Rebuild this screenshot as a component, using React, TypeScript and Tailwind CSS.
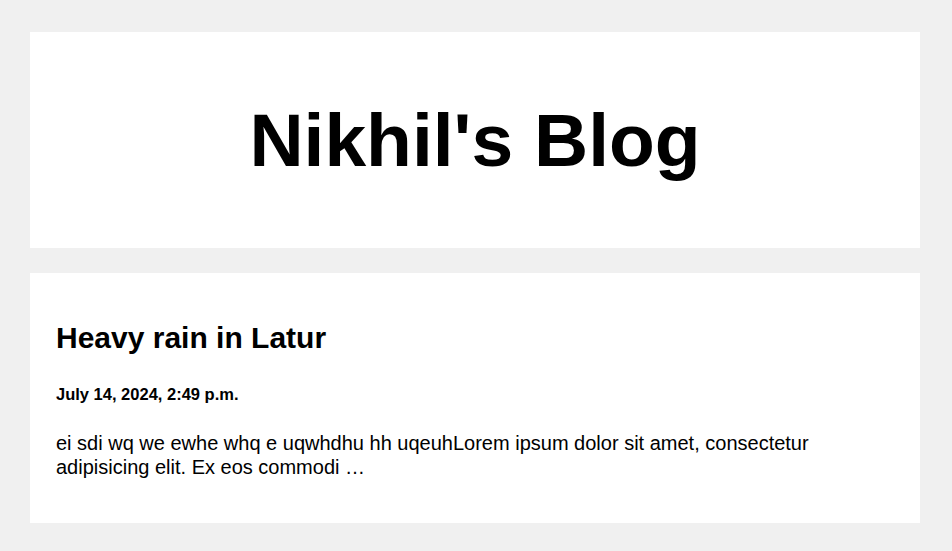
export default function App() {
  return (
    <div className="min-h-[551px] bg-[#f0f0f0] pl-[30px] pr-[32px] pt-[32px] pb-[28px] text-black" style={{ fontFamily: '"Liberation Sans", Arial, sans-serif' }}>
      <header className="flex h-[216px] items-center justify-center bg-white">
        <h1 className="text-[75px] font-bold leading-none">Nikhil's Blog</h1>
      </header>
      <article className="mt-[25px] h-[250px] bg-white px-[26px] pt-[48px]">
        <h2 className="text-[30px] font-bold leading-[34.5px]">Heavy rain in Latur</h2>
        <h4 className="mt-[29px] text-[16.5px] font-bold leading-[18.4px]">July 14, 2024, 2:49 p.m.</h4>
        <p className="mt-[28px] text-[20px] leading-[24px]">
          ei sdi wq we ewhe whq e uqwhdhu hh uqeuhLorem ipsum dolor sit amet, consectetur adipisicing elit. Ex eos commodi …
        </p>
      </article>
    </div>
  );
}
